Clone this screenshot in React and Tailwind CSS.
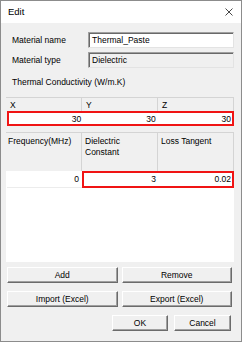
export default function App() {
  const font = { fontFamily: '"Liberation Sans", Arial, sans-serif' };
  const btn =
    "h-[16px] flex items-center justify-center bg-[#f0f0f0] border border-t-white border-l-white border-r-[#6b6b6b] border-b-[#6b6b6b] shadow-[inset_-1px_-1px_0_#a0a0a0] text-[8.5px] text-black";
  return (
    <div
      className="w-[242px] h-[342px] bg-[#f0f0f0] border border-[#8c8c8c] flex flex-col text-black"
      style={font}
    >
      <div className="h-[22px] bg-white flex items-center justify-between pl-[7px] pr-[8px] shrink-0">
        <span className="text-[9.5px]">Edit</span>
        <svg width="8" height="8" viewBox="0 0 8 8">
          <path d="M0.5 0.5 L7.5 7.5 M7.5 0.5 L0.5 7.5" stroke="#333" strokeWidth="0.9" fill="none" />
        </svg>
      </div>
      <div className="flex-1 flex flex-col pl-[5px] pr-[7px] pt-[9px]">
        <div className="grid grid-cols-[82px_1fr] items-center h-[16px]">
          <span className="pl-[6px] text-[8.5px]">Material name</span>
          <div className="h-[16px] bg-white border border-[#a0a0a0] border-b-[#e3e3e3] border-r-[#e3e3e3] shadow-[inset_1px_1px_0_#696969] flex items-center pl-[3px] text-[8.5px]">
            Thermal_Paste
          </div>
        </div>
        <div className="grid grid-cols-[82px_1fr] items-center h-[16px] mt-[4px]">
          <span className="pl-[6px] text-[8.5px]">Material type</span>
          <div className="h-[16px] bg-[#f0f0f0] border border-[#a0a0a0] border-b-[#e3e3e3] border-r-[#e3e3e3] shadow-[inset_1px_1px_0_#696969] flex items-center pl-[3px] text-[8.5px]">
            Dielectric
          </div>
        </div>
        <div className="mt-[9px] h-[10px] leading-[10px] pl-[6px] text-[8.5px]">
          Thermal Conductivity (W/m.K)
        </div>
        <div className="mt-[10px] flex flex-col">
          <div className="grid grid-cols-3 h-[14px] border-t border-[#d4d4d4]">
            <div className="border-r border-[#d4d4d4] pl-[4px] pt-[1px] text-[8.5px]">X</div>
            <div className="border-r border-[#d4d4d4] pl-[4px] pt-[1px] text-[8.5px]">Y</div>
            <div className="border-r border-[#d4d4d4] pl-[4px] pt-[1px] text-[8.5px]">Z</div>
          </div>
          <div className="grid grid-cols-3 h-[15px] bg-white border-2 border-[#f01414] ml-[1px]">
            <div className="flex items-center justify-end pr-[2px] text-[8.5px]">30</div>
            <div className="flex items-center justify-end pr-[2px] text-[8.5px]">30</div>
            <div className="flex items-center justify-end pr-[1px] text-[8.5px]">30</div>
          </div>
        </div>
        <div className="mt-[6px] h-[130px] flex flex-col bg-white">
          <div className="grid grid-cols-3 h-[39px] bg-[#f0f0f0] border-t border-[#d4d4d4]">
            <div className="border-r border-[#d4d4d4] pl-[2px] pt-[3px] text-[8.5px] leading-[11px]">Frequency(MHz)</div>
            <div className="border-r border-[#d4d4d4] pl-[3px] pt-[3px] text-[8.5px] leading-[11px]">
              Dielectric
              <br />
              Constant
            </div>
            <div className="border-r border-[#d4d4d4] pl-[3px] pt-[3px] text-[8.5px] leading-[11px]">Loss Tangent</div>
          </div>
          <div className="grid grid-cols-3 h-[15px]">
            <div className="flex items-center justify-end pr-[3px] text-[8.5px] ml-[1px] border-b border-[#ececec]">0</div>
            <div className="col-span-2 grid grid-cols-2 border-2 border-[#f01414]">
              <div className="flex items-center justify-end pr-[2px] text-[8.5px]">3</div>
              <div className="flex items-center justify-end pr-[1px] text-[8.5px]">0.02</div>
            </div>
          </div>
        </div>
        <div className="mt-[5px] grid grid-cols-2 gap-[4px] pl-[1px] pr-[2px]">
          <div className={btn}>Add</div>
          <div className={btn}>Remove</div>
        </div>
        <div className="mt-[8px] grid grid-cols-2 gap-[4px] pl-[1px] pr-[2px]">
          <div className={btn}>Import (Excel)</div>
          <div className={btn}>Export (Excel)</div>
        </div>
        <div className="mt-[8px] flex justify-end gap-[6px] pr-[3px]">
          <div className={btn + " w-[56px]"}>OK</div>
          <div className={btn + " w-[57px]"}>Cancel</div>
        </div>
      </div>
    </div>
  );
}
